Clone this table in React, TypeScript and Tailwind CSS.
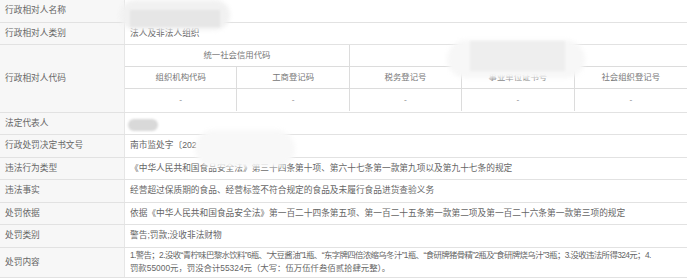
import type { ReactNode } from "react"

const rowH = "h-[22.5px]"

function Row({ label, children, className = rowH }: { label: string; children?: ReactNode; className?: string }) {
  return (
    <div className={`grid grid-cols-[125px_1fr] border-b border-[#e2e2e2] ${className}`}>
      <div className="flex items-center pl-[5px] bg-[#f7f7f7] border-r border-[#e6e6e6] text-[#666] text-[8.7px]">{label}</div>
      <div className="flex items-center pl-[5px] text-[#666]">{children}</div>
    </div>
  )
}

export default function App() {
  // 代码子表
  const codeHeads = ["组织机构代码", "工商登记码", "税务登记号", "事业单位证书号", "社会组织登记号"]

  return (
    <div className="relative w-[687px] h-[280px] overflow-hidden bg-white text-[8.7px] leading-[13px] font-['Liberation_Sans','Noto_Sans_CJK_SC',sans-serif]">
      <Row label="行政相对人名称" />
      <Row label="行政相对人类别">法人及非法人组织</Row>
      <div className="grid grid-cols-[125px_1fr] border-b border-[#e2e2e2] h-[67.5px]">
        <div className="flex items-center pl-[5px] bg-[#f7f7f7] border-r border-[#e6e6e6] text-[#666]">行政相对人代码</div>
        <div className="grid grid-cols-5 grid-rows-3 text-[#777] text-[8.4px]">
          <div className="col-span-2 flex items-center justify-center border-b border-r border-[#dcdcdc]">统一社会信用代码</div>
          <div className="col-span-3 border-b border-[#dcdcdc]"></div>
          {codeHeads.map((h, i) => (
            <div key={h} className={`flex items-center justify-center border-b border-[#dcdcdc] ${i < 4 ? "border-r" : ""}`}>{h}</div>
          ))}
          {codeHeads.map((h, i) => (
            <div key={h + "v"} className={`flex items-center justify-center text-[#999] ${i < 4 ? "border-r border-[#dcdcdc]" : ""}`}>-</div>
          ))}
        </div>
      </div>
      <Row label="法定代表人" />
      <Row label="行政处罚决定书文号">南市监处字〔202</Row>
      <Row label="违法行为类型">《中华人民共和国食品安全法》第三十四条第十项、第六十七条第一款第九项以及第九十七条的规定</Row>
      <Row label="违法事实">经营超过保质期的食品、经营标签不符合规定的食品及未履行食品进货查验义务</Row>
      <Row label="处罚依据">依据《中华人民共和国食品安全法》第一百二十四条第五项、第一百二十五条第一款第二项及第一百二十六条第一款第三项的规定</Row>
      <Row label="处罚类别">警告;罚款;没收非法财物</Row>
      <Row label="处罚内容" className="h-[30.5px]">
        <div className="whitespace-nowrap text-[8.4px]">
          <div className="tracking-[-0.6px]">1.警告；2.没收“青柠味巴黎水饮料”6瓶、“大豆酱油”1瓶、“东字牌四倍浓缩乌冬汁”1瓶、“食研牌猪骨精”2瓶及“食研牌烧乌汁”3瓶；3.没收违法所得324元；4.</div>
          <div>罚款55000元，罚没合计55324元（大写：伍万伍仟叁佰贰拾肆元整）。</div>
        </div>
      </Row>

      {/* 遮挡模糊块 */}
      <div className="absolute left-[120px] top-0 w-[110px] h-[30px] rounded-full bg-[#f1f1f1] blur-[2px]" />
      <div className="absolute left-[130px] top-[10px] w-[90px] h-[17px] bg-[#e6e6e6] blur-[1px]" />
      <div className="absolute left-[447px] top-[40px] w-[138px] h-[38px] rounded-full bg-[#f7f7f7] blur-[2px]" />
      <div className="absolute left-[470px] top-[41px] w-[95px] h-[30px] bg-[#eeeeee] blur-[1px]" />
      <div className="absolute left-[128px] top-[119px] w-[30px] h-[12px] rounded-full bg-[#d9d9d9] blur-[1px]" />
      <div className="absolute left-[195px] top-[130px] w-[100px] h-[37px] rounded-full bg-[#f8f8f8] blur-[2px]" />
    </div>
  )
}
